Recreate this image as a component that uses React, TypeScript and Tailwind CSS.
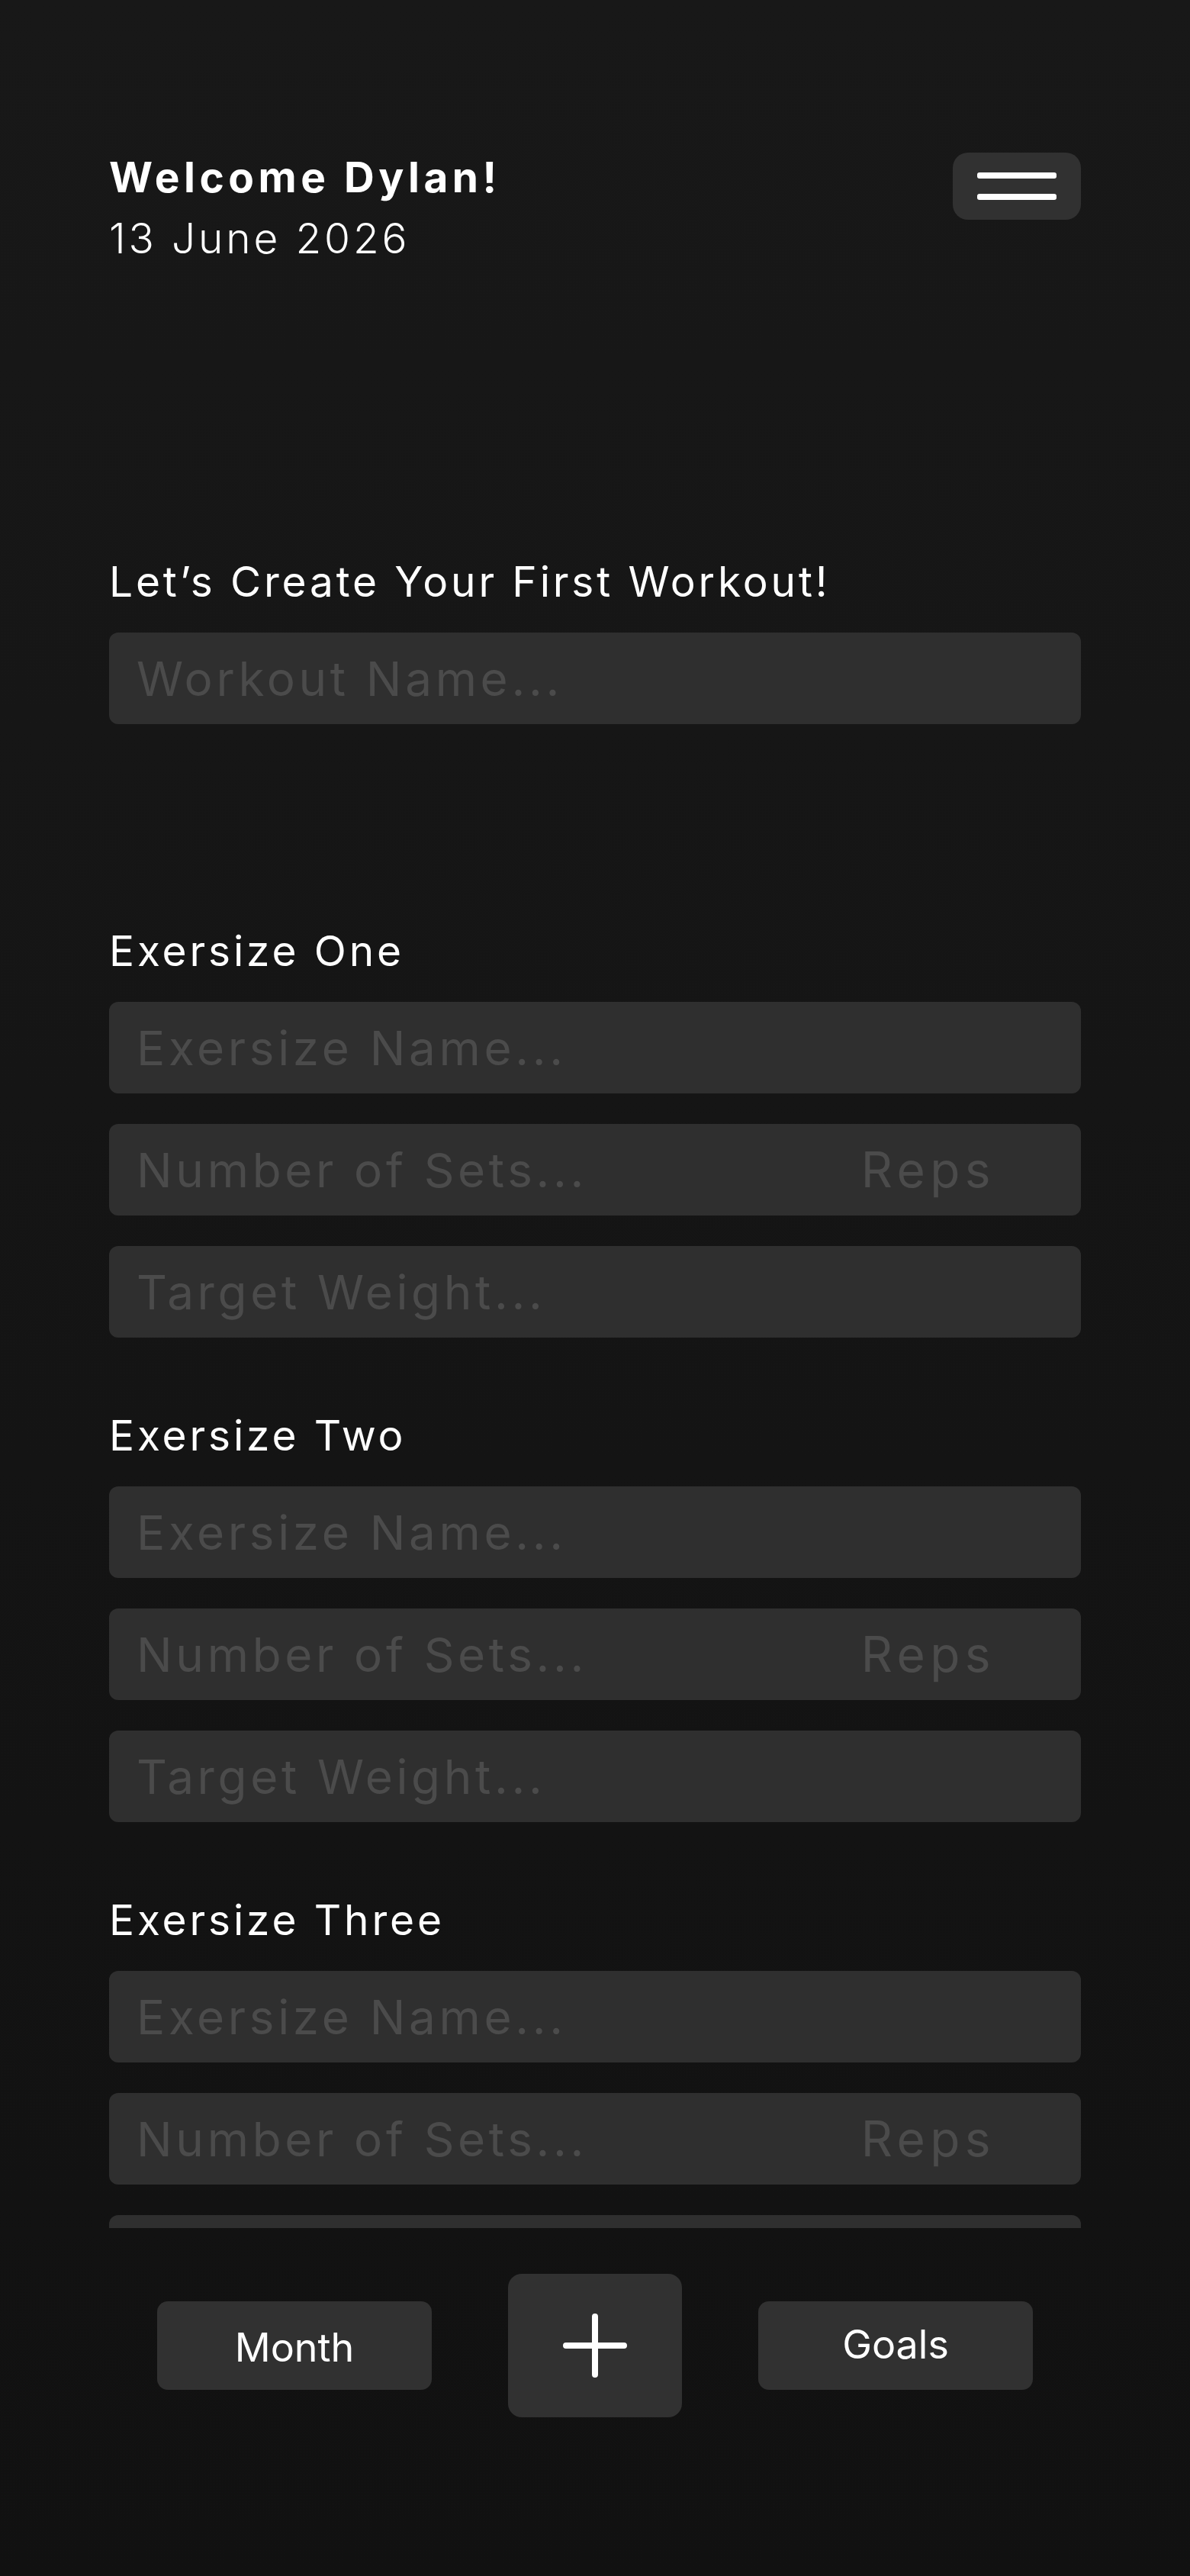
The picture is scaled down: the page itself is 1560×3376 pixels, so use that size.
import React from 'react';

interface ExersizeProps {
  title: string;
}

const Field: React.FC<{ placeholder: string; reps?: boolean }> = ({ placeholder, reps }) => {
  return (
    <div className="flex h-[120px] w-full items-center rounded-[12px] bg-[#2f2f2f] pl-[36px] pr-[112px]">
      <input
        className="min-w-0 flex-1 bg-transparent text-[62px] tracking-[0.075em] text-white outline-none placeholder:text-[#4b4b4b]"
        placeholder={placeholder}
      />
      {reps && (
        <input
          className="w-[200px] bg-transparent text-right text-[64px] tracking-[0.1em] text-white outline-none placeholder:text-[#4b4b4b]"
          placeholder="Reps"
        />
      )}
    </div>
  );
};

const Exersize: React.FC<ExersizeProps> = ({ title }) => {
  return (
    <div>
      <h3 className="mb-[27px] text-[55px] leading-[80px] tracking-[0.07em] text-white">{title}</h3>
      <div className="flex flex-col gap-[40px]">
        <Field placeholder="Exersize Name..." />
        <Field placeholder="Number of Sets..." reps />
        <Field placeholder="Target Weight..." />
      </div>
    </div>
  );
};

const App: React.FC = () => {
  const exersizes = ['Exersize One', 'Exersize Two', 'Exersize Three'];

  return (
    <div className="flex h-[3376px] w-full flex-col bg-linear-to-b from-[#181818] to-[#111111] font-['Inter','Noto_Sans',sans-serif]">
      <div className="h-[2920px] shrink-0 overflow-hidden">
        <div className="mx-auto w-[1274px] pt-[192px]">
          {/* header */}
          <div className="flex items-start justify-between">
            <div className="text-[55px] leading-[80px] text-white">
              <h1 className="font-bold tracking-[0.1em]">Welcome Dylan!</h1>
              <p className="font-light tracking-[0.07em]">13 June 2026</p>
            </div>
            <button className="mt-2 flex h-[88px] w-[168px] flex-col items-center justify-center gap-[20px] rounded-[20px] bg-[#313131]">
              <span className="h-[8px] w-[104px] rounded-[3px] bg-white" />
              <span className="h-[8px] w-[104px] rounded-[3px] bg-white" />
            </button>
          </div>

          <div className="mt-[370px]">
            <h2 className="mb-[27px] text-[55px] leading-[80px] tracking-[0.07em] text-white">
              Let’s Create Your First Workout!
            </h2>
            <Field placeholder="Workout Name..." />
          </div>

          <div className="mt-[257px] flex flex-col gap-[88px]">
            {exersizes.map((title) => (
              <Exersize key={title} title={title} />
            ))}
          </div>
        </div>
      </div>

      {/* bottom nav */}
      <div className="flex flex-1 items-start justify-center gap-[100px] pt-[60px]">
        <button className="mt-[36px] flex h-[116px] w-[360px] items-center justify-center rounded-[14px] bg-[#313131] pt-[6px] text-[52px] text-white">
          Month
        </button>
        <button className="flex h-[188px] w-[228px] items-center justify-center rounded-[18px] bg-[#313131]">
          <svg width="84" height="84" viewBox="0 0 84 84" fill="none">
            <path d="M42 4V80M4 42H80" stroke="white" strokeWidth="8" strokeLinecap="round" />
          </svg>
        </button>
        <button className="mt-[36px] flex h-[116px] w-[360px] items-center justify-center rounded-[14px] bg-[#313131] pb-[2px] text-[52px] text-white">
          Goals
        </button>
      </div>
    </div>
  );
};

export default App;
